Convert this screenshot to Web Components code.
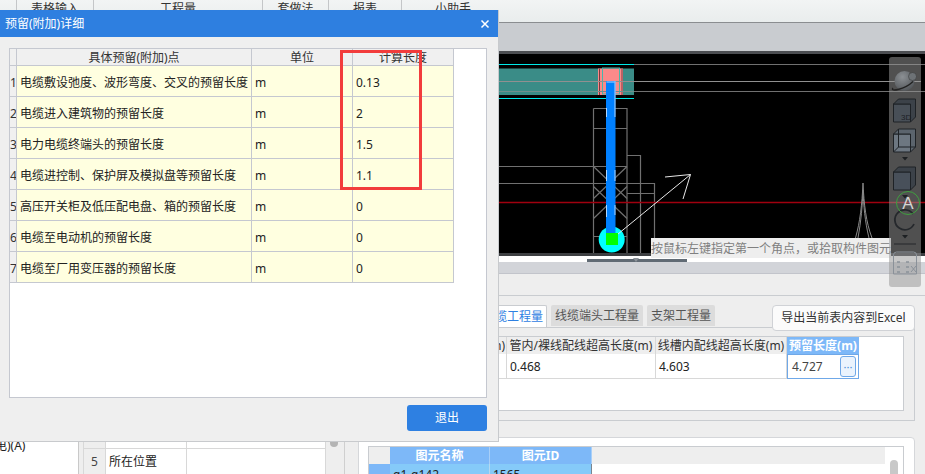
<!DOCTYPE html>
<html>
<head>
<meta charset="utf-8">
<style>
html, body { margin: 0; padding: 0; }
body {
    width: 925px;
    height: 474px;
    overflow: hidden;
    position: relative;
    font: 12px/16px "Noto Sans", "Noto Sans CJK SC", sans-serif;
    color: #222;
    background: #eee;
}
</style>
</head>
<body>
<app-shell>
    <top-tabs slot="top"></top-tabs>
    <left-pane slot="left"></left-pane>
    <right-pane slot="right">
        <cad-view></cad-view>
        <quantity-panel></quantity-panel>
        <element-panel></element-panel>
    </right-pane>
</app-shell>
<detail-dialog></detail-dialog>

<script>
class AppShell extends HTMLElement {
    constructor() {
        super();
        var shadow = this.attachShadow({mode: "open"});
        shadow.innerHTML = `
            <style>
                :host {
                    display: grid;
                    grid-template-columns: 358px 567px;
                    grid-template-rows: 23px 451px;
                    width: 925px;
                    height: 474px;
                }
                #top { grid-column: 1 / 3; display: block; }
            </style>
            <slot name="top" id="top"></slot>
            <slot name="left"></slot>
            <slot name="right"></slot>`;
    }
}

class TopTabs extends HTMLElement {
    constructor() {
        super();
        var shadow = this.attachShadow({mode: "open"});
        var tabs = [["", 17], ["表格输入", 77], ["工程量", 169], ["套做法", 66], ["报表", 73], ["小助手", 102]];
        var html = tabs.map(function(t) {
            return `<div class="tab" style="width:${t[1]}px">${t[0]}</div>`;
        }).join("");
        shadow.innerHTML = `
            <style>
                :host {
                    display: flex;
                    height: 22px;
                    border-bottom: 1px solid #8a8d90;
                    background: linear-gradient(#f2f4f4, #e9eded);
                }
                .tab {
                    box-sizing: border-box;
                    text-align: center;
                    border-right: 1px solid #c4c6c8;
                    line-height: 16px;
                    padding-top: 1px;
                    color: #333;
                }
                .tab:last-child { border-right: none; }
            </style>${html}`;
    }
}

class LeftPane extends HTMLElement {
    constructor() {
        super();
        var shadow = this.attachShadow({mode: "open"});
        shadow.innerHTML = `
            <style>
                :host { display: flex; background: #eee; overflow: hidden; }
                #tree {
                    width: 78px;
                    background: #fff;
                    border-right: 1px solid #c9c9c9;
                    display: flex;
                    align-items: flex-end;
                    overflow: hidden;
                }
                #tree span { margin: 0 0 20px -5px; white-space: nowrap; }
                #props {
                    flex: none;
                    width: 261px;
                    margin-left: 4px;
                    display: flex;
                    align-items: flex-end;
                    border-right: 1px solid #cfcfcf;
                    position: relative;
                }
                #grid {
                    display: grid;
                    grid-template-columns: 22px 81px 139px;
                    grid-template-rows: 25px 26px;
                    border-left: 1px solid #d8d8d8;
                    width: 243px;
                    box-sizing: border-box;
                    background: #fff;
                }
                #grid div {
                    border-right: 1px solid #d8d8d8;
                    border-top: 1px solid #d8d8d8;
                    padding-left: 3px;
                    line-height: 25px;
                }
                #grid .n { background: #eee; color: #444; text-align: center; padding: 0; }
                #thumb {
                    position: absolute;
                    left: 247px;
                    bottom: 27px;
                    width: 8px;
                    height: 10px;
                    border-radius: 4px;
                    background: #b4b4b4;
                }
                #gap { width: 13px; }
            </style>
            <div id="tree"><span>电)(A)</span></div>
            <div id="props">
                <div id="grid">
                    <div class="n"></div><div></div><div></div>
                    <div class="n">5</div><div>所在位置</div><div></div>
                </div>
                <div id="thumb"></div>
            </div>
            <div id="gap"></div>`;
    }
}

class RightPane extends HTMLElement {
    constructor() {
        super();
        var shadow = this.attachShadow({mode: "open"});
        shadow.innerHTML = `
            <style>
                :host {
                    display: flex;
                    flex-direction: column;
                    background: #eee;
                    overflow: hidden;
                }
                #strip { height: 28px; flex: none; background: #c9ccd0; }
            </style>
            <div id="strip"></div>
            <slot></slot>`;
    }
}

class ViewToolbar extends HTMLElement {
    constructor() {
        super();
        var shadow = this.attachShadow({mode: "open"});
        var tri = function(y) {
            return `<path d="M13 ${y}h6l-3 3.5z" fill="#1d2023"/>`;
        };
        shadow.innerHTML = `
            <style>
                :host {
                    display: block;
                    position: absolute;
                    left: 531px;
                    top: 3px;
                    width: 32px;
                    height: 230px;
                    border-radius: 3px;
                    background: rgba(151, 151, 151, .53);
                    z-index: 3;
                }
                svg { display: block; }
            </style>
            <svg width="32" height="230" viewBox="0 0 32 230">
                <defs>
                    <radialGradient id="ball" cx=".4" cy=".3" r=".9">
                        <stop offset="0" stop-color="#8c9094"/>
                        <stop offset="1" stop-color="#44484c"/>
                    </radialGradient>
                </defs>
                <circle cx="15.500" cy="24" r="10" fill="url(#ball)"/>
                <path d="M4 31c-2 2 1 2.500 5 1.500 6-1.500 12-5 15-8" fill="none" stroke="#222" stroke-width="1.300"/>
                <circle cx="23.500" cy="19.500" r="4" fill="#6d7276" stroke="#333" stroke-width=".5"/>

                <g fill="#484f57" stroke="#1e2226" stroke-width="1" stroke-linejoin="round">
                    <path d="M4.500 47h17v18h-17z"/>
                    <path d="M4.500 47l5-5h17v18l-5 5v-18h-17z" fill="#3c4249"/>
                </g>
                <text x="12" y="63" font-family="Liberation Sans" font-size="8" fill="#1c2026">3D</text>

                <g fill="#6d7781" stroke="#1e2226" stroke-width="1" stroke-linejoin="round">
                    <path d="M4.500 77h17v18h-17z"/>
                    <path d="M4.500 77l5-5h17v18l-5 5v-18h-17z" fill="#5b646d"/>
                    <path d="M9.500 72v18h17M9.500 90l-5 5" fill="none"/>
                </g>
                ${tri(100)}

                <g fill="#48505a" stroke="#1e2226" stroke-width="1" stroke-linejoin="round">
                    <path d="M4.500 115h17v18h-17z"/>
                    <path d="M4.500 115l5-5h17v18l-5 5v-18h-17z" fill="#3c4249"/>
                </g>
                ${tri(138)}

                <path d="M24 157a10 10 0 1 0 1 10" fill="none" stroke="#25282c" stroke-width="1.800"/>
                <circle cx="19" cy="146" r="11.500" fill="none" stroke="#3fa03f" stroke-width="1"/>
                <text x="19" y="152" text-anchor="middle" font-family="Liberation Sans" font-size="17" fill="#d4d4d4">A</text>
                ${tri(178)}
                <path d="M5 187h22" stroke="#24272a" stroke-width="1"/>

                <g fill="none" stroke="#8a9199" stroke-width="1">
                    <path d="M4.500 217v-19q0-3 3-3h17q3 0 3 3v19z"/>
                    <path d="M8 205h3M8 210h3M8 215h3M17 205h3M17 210h3M17 215h3" stroke-width="1.500"/>
                    <path d="M22 209l5 6M27 209l-5 6"/>
                </g>
            </svg>`;
    }
}
customElements.define("view-toolbar", ViewToolbar);

class CadView extends HTMLElement {
    constructor() {
        super();
        var shadow = this.attachShadow({mode: "open"});
        shadow.innerHTML = `
            <style>
                :host {
                    display: block;
                    flex: none;
                    position: relative;
                    height: 202px;
                    border-top: 3px solid #4c4e52;
                    background: #000;
                }
                svg { display: block; }
                #tip {
                    position: absolute;
                    left: 293px;
                    top: 184px;
                    width: 240px;
                    height: 20px;
                    line-height: 22px;
                    background: #eee;
                    color: #808080;
                    white-space: nowrap;
                    z-index: 2;
                }
                #split {
                    position: absolute;
                    left: 0;
                    right: 0;
                    top: 202px;
                    height: 6px;
                    background: #fff;
                }
                #bar {
                    position: absolute;
                    left: 229px;
                    top: 3px;
                    width: 100px;
                    height: 3px;
                    background: #616b75;
                }
                #arrow {
                    position: absolute;
                    left: 275px;
                    top: 2px;
                    border: 3px solid transparent;
                    border-top: 4px solid #8d949b;
                }
            </style>
            <svg width="567" height="202" viewBox="358 54 567 202">
                <g fill="none" stroke="#707070" stroke-width="1.200">
                    <path d="M634 64.500H925M634 91.500H925"/>
                    <path d="M593.500 108.500h33.500v145M593.500 108.500V253.500M593.500 128.500h33.500"/>
                    <path d="M358 166.500h269M358 183.500h296.500v70M627 155.500h13.500v98M627 193.500h27.500M593.500 236.500h33.500"/>
                    <path d="M593.500 166.500L627 198.500M627 166.500L593.500 198.500M593.500 218.500L627 186.500M593.500 186.500L627 218.500"/>
                </g>
                <path d="M358 254.500H925" stroke="#3d3f42" stroke-width="3"/>
                <rect x="358" y="68.500" width="276" height="26.500" fill="#3a8c87"/>
                <rect x="598" y="68.500" width="25" height="26.500" fill="#fb8a8a"/>
                <path d="M599.500 68.500V95M622 68.500V95" stroke="#7a3a40" stroke-width="1"/>
                <rect x="602.500" y="68" width="17" height="26" fill="none" stroke="#45b7ad" stroke-width="1"/>
                <path d="M358 64.500H634M358 98.500H634" stroke="#00e8e8" stroke-width="1"/>
                <path d="M358 81.500H921" stroke="#909090" stroke-width="1"/>
                <path d="M358 91.500H634" stroke="#6e8f8c" stroke-width="1"/>
                <path d="M358 202.500H925" stroke="#a0000f" stroke-width="1.500"/>
                <circle cx="611.700" cy="239.500" r="13" fill="#00ffff"/>
                <rect x="606" y="81" width="9.500" height="153" fill="#0080ff"/>
                <path d="M606.500 82h8M606.500 108v9M615 81v36M606.500 170v11M615 170v11M606.500 205v12M615 205v10" fill="none" stroke="#d8ecff" stroke-width=".8"/>
                <rect x="606" y="233" width="12" height="12" fill="#00ff00"/>
                <path d="M618 234L690.500 174.500M665 177L690.500 174.500L683 199" fill="none" stroke="#e8e8e8" stroke-width="1"/>
                <path d="M855.500 238C860 222 862 205 863 183C864 205 866 222 872 238M858 238C861 222 862.500 205 863 190C863.500 205 865 222 869 238" fill="none" stroke="#8a8a8a" stroke-width="1"/>
            </svg>
            <div id="tip">按鼠标左键指定第一个角点，或拾取构件图元</div>
            <div id="split"><div id="bar"></div><div id="arrow"></div></div>
            <view-toolbar></view-toolbar>`;
    }
}

class QuantityPanel extends HTMLElement {
    constructor() {
        super();
        var shadow = this.attachShadow({mode: "open"});
        shadow.innerHTML = `
            <style>
                :host {
                    display: block;
                    flex: none;
                    margin-top: 6px;
                    height: 159px;
                    box-sizing: border-box;
                    position: relative;
                }
                #band1 {
                    height: 11px;
                    background: #d2d4d9;
                    border-bottom: 1px solid #c2c4cb;
                }
                #band2 {
                    height: 21px;
                    border-bottom: 1px solid #c9ccd0;
                }
                #head {
                    display: flex;
                    align-items: flex-start;
                    height: 22px;
                    margin: 9px 10px 0 120px;
                    gap: 4px;
                }
                .tab {
                    height: 21px;
                    line-height: 21px;
                    padding: 0 4px;
                    background: #dcdcdc;
                    color: #555;
                    border-radius: 2px 2px 0 0;
                }
                .tab.on {
                    height: 22px;
                    width: 69px;
                    box-sizing: border-box;
                    background: #fff;
                    color: #2e80e2;
                    border: 1px solid #c9ccd0;
                    border-bottom: none;
                    white-space: nowrap;
                }
                button {
                    margin-left: auto;
                    width: 143px;
                    height: 26px;
                    padding: 0;
                    font: inherit;
                    color: #333;
                    background: #fbfbfb;
                    border: 1px solid #d0d2d6;
                    border-radius: 4px;
                    position: relative;
                    z-index: 1;
                }
                #box {
                    height: 75px;
                    margin: 0 10px 0 0;
                    border: 1px solid #c9ccd0;
                    padding: 8px 10px 9px;
                }
                #table {
                    height: 75px;
                    box-sizing: border-box;
                    border: 1px solid #c9ccd0;
                    background: #fff;
                    display: grid;
                    grid-template-columns: 137px 149px 131px 72px 1fr;
                    grid-template-rows: 17px 25px;
                    white-space: nowrap;
                }
                .h {
                    background: #eee;
                    line-height: 17px;
                    text-align: center;
                    color: #333;
                    border-right: 1px solid #d8d8d8;
                    overflow: hidden;
                }
                .h.r { text-align: right; padding-right: 1px; }
                .h.sel {
                    background: #7db8f8;
                    color: #fff;
                    font-weight: bold;
                    border-right: none;
                }
                .c {
                    line-height: 26px;
                    padding-left: 3px;
                    border-right: 1px solid #d8d8d8;
                    border-bottom: 1px solid #d8d8d8;
                    box-sizing: border-box;
                }
                .c.sel {
                    border: 1px solid #6fa8e8;
                    color: #444;
                    padding-left: 4px;
                    line-height: 24px;
                    display: flex;
                    justify-content: space-between;
                    align-items: center;
                }
                .more {
                    box-sizing: border-box;
                    width: 16px;
                    height: 21px;
                    margin-right: 2px;
                    background: #eaf3fd;
                    border: 1px solid #6fa8e8;
                    border-radius: 3px;
                    color: #4f8fd8;
                    font-size: 11px;
                    line-height: 19px;
                    text-align: center;
                }
            </style>
            <div id="band1"></div>
            <div id="band2"></div>
            <div id="head">
                <div class="tab on">线缆工程量</div>
                <div class="tab">线缆端头工程量</div>
                <div class="tab">支架工程量</div>
                <button>导出当前表内容到Excel</button>
            </div>
            <div id="box">
                <div id="table">
                    <div class="h r">长度(m)</div>
                    <div class="h">管内/裸线配线超高长度(m)</div>
                    <div class="h">线槽内配线超高长度(m)</div>
                    <div class="h sel">预留长度(m)</div>
                    <div></div>
                    <div class="c"></div>
                    <div class="c">0.468</div>
                    <div class="c">4.603</div>
                    <div class="c sel"><span>4.727</span><span class="more">···</span></div>
                    <div></div>
                </div>
            </div>`;
    }
}

class ElementPanel extends HTMLElement {
    constructor() {
        super();
        var shadow = this.attachShadow({mode: "open"});
        shadow.innerHTML = `
            <style>
                :host {
                    display: block;
                    flex: none;
                    margin: 16px 10px 0 0;
                    height: 60px;
                    background: #fff;
                    border: 1px solid #d5d7da;
                    border-radius: 4px 4px 0 0;
                    padding: 8px 10px 0 9px;
                    box-sizing: border-box;
                }
                #table {
                    border: 1px solid #c9ccd0;
                    height: 60px;
                    box-sizing: border-box;
                    display: grid;
                    grid-template-columns: 21px 100px 102px 1fr 18px;
                    grid-template-rows: 17px 25px;
                    position: relative;
                }
                .corner, .fill { background: #eee; }
                .h {
                    background: #7db8f8;
                    color: #fff;
                    font-weight: bold;
                    text-align: center;
                    line-height: 17px;
                    border-right: 1px solid #a8cff8;
                }
                .mark { background: #7db8f8; }
                .c {
                    background: #85caf9;
                    padding-left: 3px;
                    line-height: 22px;
                    border-right: 1px solid #7a8590;
                }
                .c.a { border-right: 1px solid #b5d8f0; }
                #thumb {
                    position: absolute;
                    right: 5px;
                    top: 13px;
                    width: 8px;
                    height: 30px;
                    border-radius: 4px;
                    background: #c8c8c8;
                }
            </style>
            <div id="table">
                <div class="corner"></div>
                <div class="h">图元名称</div>
                <div class="h">图元ID</div>
                <div class="fill"></div>
                <div></div>
                <div class="mark"></div>
                <div class="c a">q1-q142</div>
                <div class="c">1565</div>
                <div></div>
                <div></div>
                <div id="thumb"></div>
            </div>`;
    }
}

class DetailDialog extends HTMLElement {
    constructor() {
        super();
        var shadow = this.attachShadow({mode: "open"});
        var rows = [
            ["电缆敷设弛度、波形弯度、交叉的预留长度", "0.13"],
            ["电缆进入建筑物的预留长度", "2"],
            ["电力电缆终端头的预留长度", "1.5"],
            ["电缆进控制、保护屏及模拟盘等预留长度", "1.1"],
            ["高压开关柜及低压配电盘、箱的预留长度", "0"],
            ["电缆至电动机的预留长度", "0"],
            ["电缆至厂用变压器的预留长度", "0"]
        ];
        var body = rows.map(function(r, i) {
            return `<div class="n">${i + 1}</div><div class="c">${r[0]}</div><div class="c">m</div><div class="c">${r[1]}</div>`;
        }).join("");
        shadow.innerHTML = `
            <style>
                :host {
                    display: flex;
                    flex-direction: column;
                    position: absolute;
                    left: 0;
                    top: 10px;
                    width: 499px;
                    height: 432px;
                    box-sizing: border-box;
                    background: #efefef;
                    border-right: 1px solid #c8cacd;
                    border-bottom: 1px solid #c8cacd;
                    z-index: 5;
                }
                #title {
                    flex: none;
                    height: 27px;
                    background: #2e7fe0;
                    color: #fff;
                    line-height: 27px;
                    padding: 0 8px 0 5px;
                    display: flex;
                    justify-content: space-between;
                    align-items: center;
                }
                #body {
                    flex: 1;
                    display: flex;
                    flex-direction: column;
                    padding: 11px 11px 0 9px;
                }
                #box {
                    position: relative;
                    height: 350px;
                    flex: none;
                    box-sizing: border-box;
                    background: #fff;
                    border: 1px solid #c5c8d0;
                }
                #grid {
                    display: grid;
                    grid-template-columns: 7px 235px 101px 101px;
                    grid-template-rows: 16px repeat(7, 31px);
                    width: 444px;
                }
                .hd {
                    background: #f0f0f0;
                    text-align: center;
                    line-height: 18px;
                    overflow: hidden;
                    color: #333;
                    border-right: 1px solid #c5c8d0;
                    white-space: nowrap;
                }
                .n {
                    background: #f0f0f0;
                    border-top: 1px solid #c5c8d0;
                    line-height: 33px;
                    white-space: nowrap;
                    color: #333;
                    border-right: 1px solid #c5c8d0;
                    box-sizing: border-box;
                    overflow: hidden;
                }
                .c {
                    background: #ffffe0;
                    border-top: 1px solid #c5c8d0;
                    border-right: 1px solid #c5c8d0;
                    line-height: 33px;
                    padding-left: 3px;
                    white-space: nowrap;
                    overflow: hidden;
                    box-sizing: border-box;
                }
                .n:nth-last-child(-n+4), .c:nth-last-child(-n+3) {
                    height: 32px;
                    border-bottom: 1px solid #c5c8d0;
                }
                #mark {
                    position: absolute;
                    left: 330px;
                    top: 1px;
                    width: 82px;
                    height: 140px;
                    box-sizing: border-box;
                    border: 3px solid #f23c3c;
                }
                #foot {
                    display: flex;
                    justify-content: flex-end;
                    padding-top: 7px;
                }
                button {
                    width: 80px;
                    height: 26px;
                    padding: 0;
                    border: none;
                    border-radius: 3px;
                    background: #2e80e2;
                    color: #fff;
                    font: inherit;
                }
                svg { display: block; }
            </style>
            <div id="title">
                <span>预留(附加)详细</span>
                <svg width="10" height="10" viewBox="0 0 10 10"><path d="M1.500 1.500l7 7M8.500 1.500l-7 7" stroke="#fff" stroke-width="1.500"/></svg>
            </div>
            <div id="body">
                <div id="box">
                    <div id="grid">
                        <div class="hd"></div>
                        <div class="hd">具体预留(附加)点</div>
                        <div class="hd">单位</div>
                        <div class="hd">计算长度</div>
                        ${body}
                    </div>
                    <div id="mark"></div>
                </div>
                <div id="foot"><button>退出</button></div>
            </div>`;
    }
}

customElements.define("app-shell", AppShell);
customElements.define("top-tabs", TopTabs);
customElements.define("left-pane", LeftPane);
customElements.define("right-pane", RightPane);
customElements.define("cad-view", CadView);
customElements.define("quantity-panel", QuantityPanel);
customElements.define("element-panel", ElementPanel);
customElements.define("detail-dialog", DetailDialog);
</script>
</body>
</html>
